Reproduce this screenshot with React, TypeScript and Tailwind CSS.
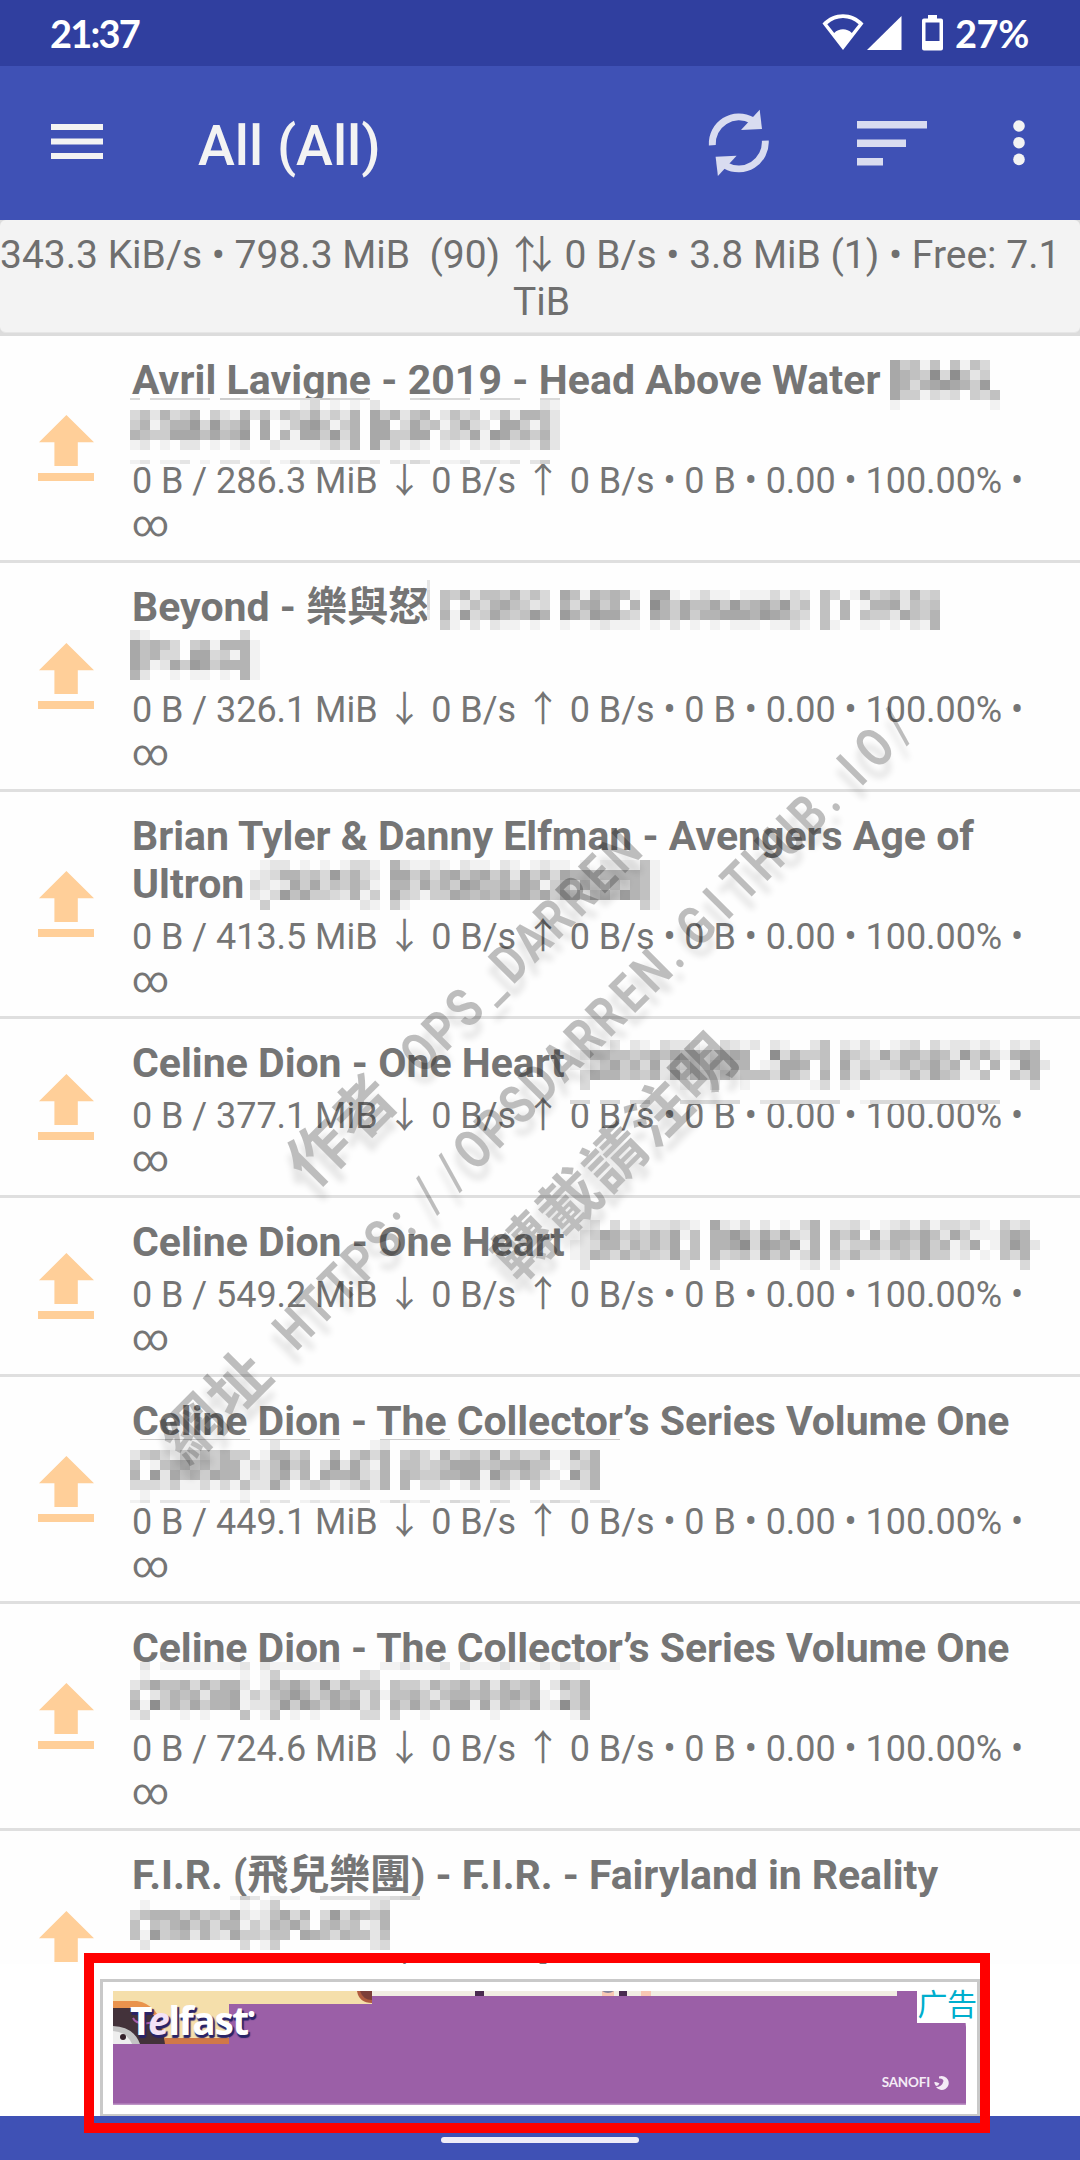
import React from 'react';

const SHADES = ['#fefefe', '#f2f2f2', '#e5e5e5', '#d9d9d9', '#cdcdcd', '#c1c1c1', '#b4b4b4', '#a8a8a8', '#9c9c9c', '#8e8e8e'];

type MosaicProps = { rows: string[]; at: string; cellHeight?: number; cellWidth?: number };

/* Censor blocks: every digit is one cell, 0 = white, 9 = darkest grey, a dot leaves the cell empty. */
function Mosaic({ rows, at, cellHeight = 10, cellWidth = 10 }: MosaicProps) {
  const cols = Math.max(...rows.map((r) => r.length));
  return (
    <svg
      className={`absolute ${at}`}
      width={cols * cellWidth}
      height={rows.length * cellHeight}
      shapeRendering="crispEdges"
      aria-hidden="true"
    >
      {rows.map((row, y) =>
        row
          .split('')
          .map((c, x) =>
            c === '.' ? null : (
              <rect
                key={`${x}-${y}`}
                x={x * cellWidth}
                y={y * cellHeight}
                width={cellWidth}
                height={cellHeight}
                fill={SHADES[Number(c)]}
              />
            ),
          ),
      )}
    </svg>
  );
}

type Torrent = {
  title: string[];
  size: string;
  height: string;
  metaGap: string;
  tracking?: string;
  mosaics: MosaicProps[];
};

const torrents: Torrent[] = [
  {
    title: ['Avril Lavigne - 2019 - Head Above Water', ''],
    size: '286.3',
    height: 'h-[227px]',
    metaGap: 'mt-[6px]',
    tracking: 'tracking-[0.06px]',
    mosaics: [
      {
        at: 'left-[890px] top-[24px]',
        rows: ['74515051530', '76549395240', '76367876480', '74413230435', '10000000001'],
      },
      { at: 'left-[130px] top-[62px]', cellHeight: 2, rows: ['3033333304433433333433330000343333033330033'] },
      {
        at: 'left-[130px] top-[64px]',
        rows: [
          '0000000000000000013010102000000000000000021',
          '3526346042162515436242607462560253402516652',
          '4614668384570701478514607703745147320774152',
          '6544777575680706177483607744770343718746462',
          '1201022010120021111242607241210210212122152',
        ],
      },
      { at: 'left-[130px] top-[124px]', cellHeight: 4, rows: ['12011201022012013121223120213201120221202400'] },
    ],
  },
  {
    title: ['Beyond - 樂與怒', ''],
    size: '326.1',
    height: 'h-[229px]',
    metaGap: 'mt-[8px]',
    mosaics: [
      { at: 'left-[427px] top-[17px]', cellWidth: 3, rows: ['2', '3', '3', '2'] },
      {
        at: 'left-[440px] top-[27px]',
        rows: [
          '54625546353075165651077101311011131320530163452634',
          '50253675423063674606096475574856758350506016672545',
          '61834754586086487743076474667776876430506054427546',
          '41020211010010012111010201010111011310510011010216',
        ],
      },
      {
        at: 'left-[130px] top-[67px]',
        rows: ['2100000000030', '7565304516661', '7563307734161', '7512748746661', '6200101101061'],
      },
    ],
  },
  {
    title: ['Brian Tyler & Danny Elfman - Avengers Age of', 'Ultron'],
    size: '413.5',
    height: 'h-[227px]',
    metaGap: 'mt-[6px]',
    mosaics: [
      {
        at: 'left-[240px] top-[68px]',
        rows: [
          '.01220101013310621121021102101211010111151',
          '.12366453846320774636746746274637665666651',
          '.32127473546410663746487556476146375464651',
          '.21385744326140743144765657675747636758651',
          '..4000000000210410000000000000000000000041',
        ],
      },
    ],
  },
  {
    title: ['Celine Dion - One Heart'],
    size: '377.1',
    height: 'h-[179px]',
    metaGap: 'mt-[6px]',
    mosaics: [
      {
        at: 'left-[560px] top-[21px]',
        rows: [
          '...1020210322100321202100250213101230312212102130',
          '.126655456576645676009364450643273664652846316760',
          '.113574637254646566012776050724334645746140601862',
          '.037664546273654645553753060626322363754115005360',
          '.030000000001002001000000130210000000000000000030',
        ],
      },
      { at: 'left-[570px] top-[81px]', cellHeight: 4, rows: ['3303303300033333300233333330013333333343333'] },
    ],
  },
  {
    title: ['Celine Dion - One Heart'],
    size: '549.2',
    height: 'h-[179px]',
    metaGap: 'mt-[6px]',
    mosaics: [
      {
        at: 'left-[560px] top-[22px]',
        rows: [
          '..1203021223210721302010360223101231413323104230',
          '.02476454647150668637473260646072665752741115760',
          '.12366364647050667938768160624463654746137015862',
          '.12653645437350634527461360536332453744120105360',
          '.02000000000300300000000120200000000000000000030',
        ],
      },
    ],
  },
  {
    title: ['Celine Dion - The Collector’s Series Volume One', ''],
    size: '449.1',
    height: 'h-[227px]',
    metaGap: 'mt-[6px]',
    tracking: 'tracking-[-0.06px]',
    mosaics: [
      { at: 'left-[130px] top-[62px]', cellHeight: 1, rows: ['0444444444440444444440000444444404444444444444444'] },
      {
        at: 'left-[130px] top-[63px]',
        rows: [
          '00000000000000200000000012000000000000000000000',
          '24531435464401663500604636045316345372533611736',
          '50156756466142584603827316055345777456675501346',
          '60827564766132572607667326065446677185365320836',
          '33324113131522730343123526060332014134104002236',
          '01000000000100000000000000000000000000000000000',
        ],
      },
      { at: 'left-[130px] top-[123px]', cellHeight: 3, rows: ['120221120112031201212123013212013220320021322022'] },
    ],
  },
  {
    title: ['Celine Dion - The Collector’s Series Volume One', ''],
    size: '724.6',
    height: 'h-[227px]',
    metaGap: 'mt-[6px]',
    tracking: 'tracking-[-0.06px]',
    mosaics: [
      { at: 'left-[130px] top-[58px]', cellHeight: 8, rows: ['0201111111120211111110000112111202111211121221111'] },
      {
        at: 'left-[130px] top-[66px]',
        rows: [
          '0100000000010140000000032000000000000000000000',
          '2475563646620165753836444054426456362645602646',
          '5024656266714256863575625155642566564675610346',
          '6194647466712248486476725064746377172654712946',
          '1300010100050150101000033040010000001000000015',
        ],
      },
    ],
  },
  {
    title: ['F.I.R. (飛兒樂團) - F.I.R. - Fairyland in Reality', ''],
    size: '300.0',
    height: 'h-[229px]',
    metaGap: 'mt-[8px]',
    tracking: 'tracking-[-0.06px]',
    mosaics: [
      { at: 'left-[130px] top-[65px]', cellHeight: 4, rows: ['00000000001420111002222222344'] },
      {
        at: 'left-[130px] top-[69px]',
        rows: [
          '01000000000101400000000023',
          '35666464547212573603836546',
          '50546746366142657405645126',
          '51845626327443550765365525',
          '02000000000301400000000023',
        ],
      },
    ],
  },
];

function SeedIcon() {
  return (
    <svg width="56" height="66" viewBox="0 0 56 66" fill="#ffcf99" aria-hidden="true">
      <path d="M28.4 0L56 27.3H39.8V51H16.4V27.3H1Z" />
      <rect y="58" width="56" height="8" />
    </svg>
  );
}

function TorrentRow({ torrent }: { torrent: Torrent }) {
  return (
    <li className={`relative flex shrink-0 items-stretch border-b-[3px] border-[#dfdfdf] ${torrent.height}`}>
      <div className="flex w-[132px] shrink-0 items-center pl-[38px]">
        <SeedIcon />
      </div>
      <div className="min-w-0 flex-1 pt-[20px] text-[#757575]">
        {torrent.title.map((line, i) => (
          <p key={i} className={`h-[48px] text-[41px] leading-[49px] font-bold whitespace-nowrap ${torrent.tracking ?? ''}`}>
            {line}
          </p>
        ))}
        <div className={`text-[36px] leading-[47px] tracking-[-0.05px] ${torrent.metaGap}`}>
          <p className="h-[44px] whitespace-nowrap">
            0 B / {torrent.size} MiB ↓ 0 B/s ↑ 0 B/s • 0 B • 0.00 • 100.00% •
          </p>
          <p className="h-[44px] leading-[45px]">∞</p>
        </div>
      </div>
      {torrent.mosaics.map((m, i) => (
        <Mosaic key={i} {...m} />
      ))}
    </li>
  );
}

function StatusBar() {
  return (
    <div className="flex h-[66px] shrink-0 items-center justify-between bg-[#303f9f] pr-[51px] pl-[50px] text-white">
      <span className="font-[Lato] text-[38px] leading-[68px] font-bold tracking-[-1.8px]">21:37</span>
      <div className="flex items-center">
        <svg width="122" height="38" viewBox="0 0 122 38" fill="#fff" aria-hidden="true">
          <path
            d="M.5 9.5C12-2.8 30-2.8 41.5 9.5L21 36ZM5.3 10.3L12.2 19C17 14 25 14 29.8 19L36.7 10.3C27.5 2 14.5 2 5.3 10.3Z"
            fillRule="evenodd"
          />
          <path d="M79.5 2V36H45Z" />
          <path
            d="M106 1h9v3.500h4a2 2 0 0 1 2 2V34.500a2 2 0 0 1-2 2h-17a2 2 0 0 1-2-2V6.500a2 2 0 0 1 2-2h4ZM103.500 8.500V27H117.500V8.500Z"
            fillRule="evenodd"
          />
        </svg>
        <span className="ml-[11px] font-[Lato] text-[38px] leading-[68px] font-bold tracking-[-0.4px]">27%</span>
      </div>
    </div>
  );
}

function SyncIcon() {
  const half = (
    <>
      <path d="M12.3 45.2A26.7 26.7 0 0 1 52 20.3" fill="none" stroke="#d9dcf0" strokeWidth="6.9" />
      <path d="M59.7 9.700L62 29L41 30Z" fill="#d9dcf0" />
    </>
  );
  return (
    <svg width="78" height="86" viewBox="0 0 78 86" aria-hidden="true">
      {half}
      <g transform="rotate(180 38.8 42.9)">{half}</g>
    </svg>
  );
}

function AppBar() {
  return (
    <header className="flex h-[154px] shrink-0 items-center bg-[#3f51b5] pl-[51px]">
      <svg width="52" height="35" viewBox="0 0 52 35" fill="#f3f3f3" className="mb-[3px]" aria-hidden="true">
        <rect width="52" height="6" />
        <rect y="14.5" width="52" height="6" />
        <rect y="29" width="52" height="6" />
      </svg>
      <h1 className="mt-[7px] ml-[95px] text-[55.500px] leading-[66px] font-medium text-[#f3f3f3]">All (All)</h1>
      <div className="ml-auto flex items-center">
        <SyncIcon />
        <svg width="70" height="45" viewBox="0 0 70 45" fill="#d9dcf0" className="ml-[79px]" aria-hidden="true">
          <rect width="70" height="7.5" />
          <rect y="18.5" width="49" height="7.5" />
          <rect y="37" width="26" height="7.5" />
        </svg>
        <svg width="12" height="46" viewBox="0 0 12 46" fill="#f3f3f3" className="mr-[55px] ml-[86px]" aria-hidden="true">
          <circle cx="6" cy="6" r="5.8" />
          <circle cx="6" cy="22.7" r="5.8" />
          <circle cx="6" cy="39.4" r="5.8" />
        </svg>
      </div>
    </header>
  );
}

function Summary() {
  return (
    <div className="h-[116px] shrink-0 bg-[#dcdcdc]">
      <div className="h-[113px] rounded-[6px] border-b border-[#e6e6e6] bg-[#f3f3f3] pt-[12px] text-center text-[39px] leading-[47px] text-[#6f6f6f]">
        <p className="h-[47px] pr-[21px] whitespace-pre">
          343.3 KiB/s • 798.3 MiB  (90) <span className="mr-[2px] ml-[4px]">⇅</span> 0 B/s • 3.8 MiB (1) • Free: 7.1
        </p>
        <p className="h-[47px] pl-[3px]">TiB</p>
      </div>
    </div>
  );
}

function WatermarkLine({ han, latin = '' }: { han: string; latin?: string }) {
  return (
    <div className="flex h-[106px] items-center justify-center">
      {han.split('').map((c, i) => (
        <span key={i} className="w-[63.200px] text-center text-[61px] font-bold">
          {c}
        </span>
      ))}
      {latin.split('').map((c, i) => (
        <span key={i} className={`flex w-[31.600px] whitespace-pre ${c === '.' || c === ':' ? 'justify-start pl-[2px]' : 'justify-center'}`}>
          <span className={`scale-x-[0.8] text-[54px] ${c === '/' || c === '_' ? 'font-medium' : 'font-bold'}`}>{c}</span>
        </span>
      ))}
    </div>
  );
}

function Watermark() {
  return (
    <div className="pointer-events-none absolute inset-x-0 top-[924px] flex justify-center opacity-25 drop-shadow-[0_14px_3px_rgba(0,0,0,0.4)]">
      <div className="w-[1060px] -rotate-45 leading-[106px] text-black">
        <WatermarkLine han="作者" latin=" OPS_DARREN" />
        <WatermarkLine han="網址" latin=" HTTPS://OPSDARREN.GITHUB.IO/" />
        <WatermarkLine han="轉載請注明" />
      </div>
    </div>
  );
}

function AdBanner() {
  return (
    <div className="flex h-[152px] shrink-0 justify-center bg-white pt-[15px]">
      <div className="relative h-[137px] w-[880px] border-[3px] border-b-2 border-[#c9c9c9] bg-white">
        <div className="relative mt-[9px] ml-[10px] h-[114px] w-[853px] overflow-hidden rounded-tr-[36px] bg-[#9b5fa7]">
          <svg width="853" height="114" viewBox="0 0 853 114" className="absolute top-0 left-0" aria-hidden="true">
            <rect width="259" height="13" fill="#f5dfab" />
            <rect width="116" height="53" fill="#f5dfab" />
            <path d="M0 10H24Q48 14 52 47V53H0Z" fill="#e9934d" />
            <path d="M52 47H116V53H50Z" fill="#d07848" />
            <path d="M0 17H28Q48 22 52 53H0Z" fill="#43323a" />
            <path d="M0 35Q21 36 27 53H0Z" fill="#c4c4c4" />
            <path d="M0 40Q14 41 19 53H0Z" fill="#eeeeee" />
            <circle cx="10" cy="46" r="3" fill="#33202a" />
            <path d="M244 0H259V12Q246 12 244 0Z" fill="#b05c40" />
            <path d="M247 0H259V9Q250 9 247 0Z" fill="#7c3f3a" />
            <rect x="259" width="525" height="5" fill="#f1ede3" />
            <rect x="362" width="9" height="5" fill="#4a2c50" />
            <rect x="489" width="12" height="5" fill="#f8c8b4" />
            <path d="M489 0H501Q495 4 489 0Z" fill="#85859b" />
            <rect x="506" width="8" height="5" fill="#4a2c50" />
            <rect x="528" width="10" height="5" fill="#f8c8b4" />
            <rect y="112.5" width="853" height="1.5" fill="#bd94c6" />
            <path d="M20 27Q24 36 45 30" fill="none" stroke="#a35bab" strokeWidth="2" />
          </svg>
          <div className="absolute top-[7px] left-[17px] flex items-start font-['Open_Sans'] text-[39px] leading-[44px] font-bold tracking-[-1.5px] text-white [text-shadow:2px_2px_1px_#2a2468,1px_3px_1px_#2a2468]">
            T<span className="-ml-[3px] text-[#f3e2f6] italic">e</span>lfast<span className="-mt-[1px] text-[20px] leading-[34px]">•</span>
          </div>
          <div className="absolute right-[17px] bottom-[14px] flex items-center gap-[4px] font-[Lato] text-[13.500px] leading-[18px] font-bold tracking-[-0.2px] text-[#f4ebf6]">
            SANOFI
            <svg width="15" height="15" viewBox="0 0 15 15" fill="#f4ebf6" aria-hidden="true">
              <path d="M5 1.500A7 7 0 1 1 2 12Q8 12 9.500 6Q9 3 5 3.500Z" />
              <path d="M.3 7Q3 6.500 5.500 8.500Q4 11 2 11Q.5 9.500 .3 7Z" />
            </svg>
          </div>
        </div>
        <span className="absolute top-[6px] right-0 flex h-[35px] w-[60px] justify-center bg-white font-['Noto_Sans_CJK_SC'] text-[30px] leading-[29px] tracking-[-0.5px] text-[#00aecd]">
          广告
        </span>
      </div>
    </div>
  );
}

export default function App() {
  return (
    <div className="relative flex h-[2160px] w-[1080px] flex-col overflow-hidden bg-white font-[Roboto,'Noto_Sans_CJK_TC',sans-serif]">
      <StatusBar />
      <AppBar />
      <Summary />
      <ul className="flex min-h-0 flex-1 flex-col overflow-hidden bg-[#fefefe]">
        {torrents.map((t, i) => (
          <TorrentRow key={i} torrent={t} />
        ))}
      </ul>
      <AdBanner />
      <nav className="flex h-[44px] shrink-0 justify-center bg-[#3f51b5] pt-[21px]">
        <div className="h-[6px] w-[198px] rounded-full bg-[#efedf8]" />
      </nav>
      <Watermark />
      <div className="pointer-events-none absolute top-[1953px] left-[84px] h-[180px] w-[906px] border-[10px] border-[#ff0000]" />
    </div>
  );
}
